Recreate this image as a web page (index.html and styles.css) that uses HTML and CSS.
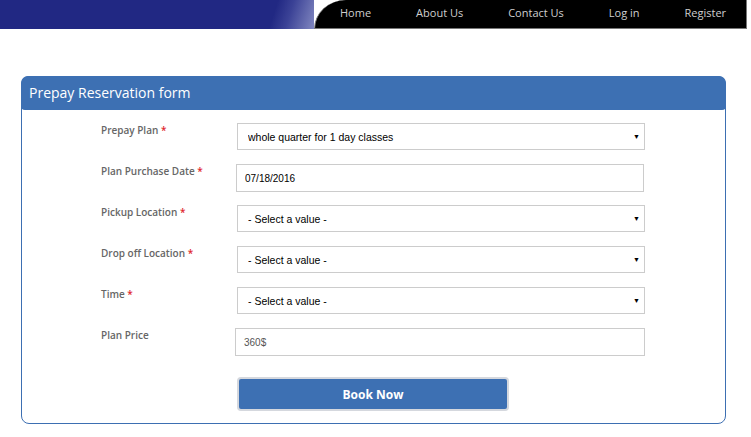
FILE: index.html
```html
<!DOCTYPE html>
<html lang="en">

<head>
    <meta charset="UTF-8">
    <meta name="viewport" content="width=device-width, initial-scale=1.0">
    <title>Prepay Reservation</title>
    <link rel="stylesheet" href="styles.css">
</head>

<body>
    <!-- Top bar -->
    <div class="topbar">
        <div class="brand"></div>
        <ul class="nav">
            <li><a href="#">Home</a></li>
            <li><a href="#">About Us</a></li>
            <li><a href="#">Contact Us</a></li>
            <li><a href="#">Log in</a></li>
            <li><a href="#">Register</a></li>
        </ul>
    </div>

    <!-- Reservation form -->
    <div class="panel">
        <div class="panel-heading">Prepay Reservation form</div>
        <form class="panel-body" id="prepay-form">
            <div class="row">
                <label for="plan">Prepay Plan <span class="req">*</span></label>
                <div class="select">
                    <select id="plan">
                        <option>whole quarter for 1 day classes</option>
                    </select>
                    <span class="caret">&#9660;</span>
                </div>
            </div>
            <div class="row">
                <label for="date">Plan Purchase Date <span class="req">*</span></label>
                <input type="text" id="date" class="field shift" value="07/18/2016">
            </div>
            <div class="row">
                <label for="pickup">Pickup Location <span class="req">*</span></label>
                <div class="select">
                    <select id="pickup">
                        <option>- Select a value -</option>
                    </select>
                    <span class="caret">&#9660;</span>
                </div>
            </div>
            <div class="row">
                <label for="dropoff">Drop off Location <span class="req">*</span></label>
                <div class="select">
                    <select id="dropoff">
                        <option>- Select a value -</option>
                    </select>
                    <span class="caret">&#9660;</span>
                </div>
            </div>
            <div class="row">
                <label for="time">Time <span class="req">*</span></label>
                <div class="select">
                    <select id="time">
                        <option>- Select a value -</option>
                    </select>
                    <span class="caret">&#9660;</span>
                </div>
            </div>
            <div class="row">
                <label for="price">Plan Price</label>
                <input type="text" id="price" class="field price" value="360$" readonly>
            </div>
            <div class="actions">
                <button type="submit">Book Now</button>
            </div>
        </form>
    </div>
</body>

</html>
```

FILE: styles.css
```css
* {
    margin: 0;
    padding: 0;
    box-sizing: border-box;
}

body {
    font-family: "Open Sans", Arial, sans-serif;
    background-color: #fff;
}

.topbar {
    display: flex;
    height: 29px;
    padding-right: 4px;
}

.brand {
    flex: 1;
    background: linear-gradient(108deg, #212883 0%, #212883 86%, #3b4296 91%, #8187c0 100%);
}

.nav {
    display: flex;
    align-items: center;
    list-style: none;
    width: 433px;
    background-color: #000;
    border-top-left-radius: 32px 29px;
    border-bottom: 1px solid #777;
    border-left: 1px solid #777;
    border-right: 1px solid #777;
    padding-left: 25px;
    gap: 45px;
    white-space: nowrap;
}

.nav a {
    color: #cfcfcf;
    text-decoration: none;
    font-size: 11px;
    position: relative;
    top: -3px;
}

.panel {
    margin: 47px 0 0 21px;
    width: 705px;
    border: 1px solid #3d6fb2;
    border-radius: 8px;
}

.panel-heading {
    background-color: #3d70b3;
    color: #fff;
    font-size: 14px;
    height: 34px;
    line-height: 34px;
    padding-left: 8px;
    border-radius: 7px 7px 4px 4px;
    margin: -1px -1px 0 -1px;
}

.panel-body {
    padding: 13px 0 12px 79px;
}

.row {
    display: flex;
    align-items: flex-start;
    height: 41px;
}

.row label {
    width: 136px;
    font-size: 10px;
    font-weight: 600;
    color: #666;
}

.req {
    color: #e0262c;
}

.select {
    position: relative;
    width: 408px;
}

.select select {
    appearance: none;
    width: 100%;
    height: 27px;
    border: 1px solid #ccc;
    background-color: #fff;
    font-family: Arial, "Liberation Sans", sans-serif;
    font-size: 10.5px;
    color: #000;
    padding-left: 10px;
}

.caret {
    position: absolute;
    right: 5px;
    top: 9px;
    font-size: 7px;
    color: #000;
    pointer-events: none;
}

.field {
    width: 408px;
    height: 28px;
    border: 1px solid #ccc;
    font-family: Arial, "Liberation Sans", sans-serif;
    font-size: 10px;
    color: #000;
    padding-left: 8px;
}

.shift {
    margin-left: -1px;
}

.price {
    margin-left: -2px;
    width: 410px;
    color: #555;
}

.actions {
    padding: 8px 0 0 136px;
}

button {
    width: 272px;
    height: 34px;
    background-color: #3d70b3;
    color: #fff;
    border: 2px solid #d5d8de;
    border-radius: 4px;
    font-family: "Open Sans", Arial, sans-serif;
    font-size: 12px;
    font-weight: bold;
    cursor: pointer;
}

button:hover {
    background-color: #2f5d99;
}
```
